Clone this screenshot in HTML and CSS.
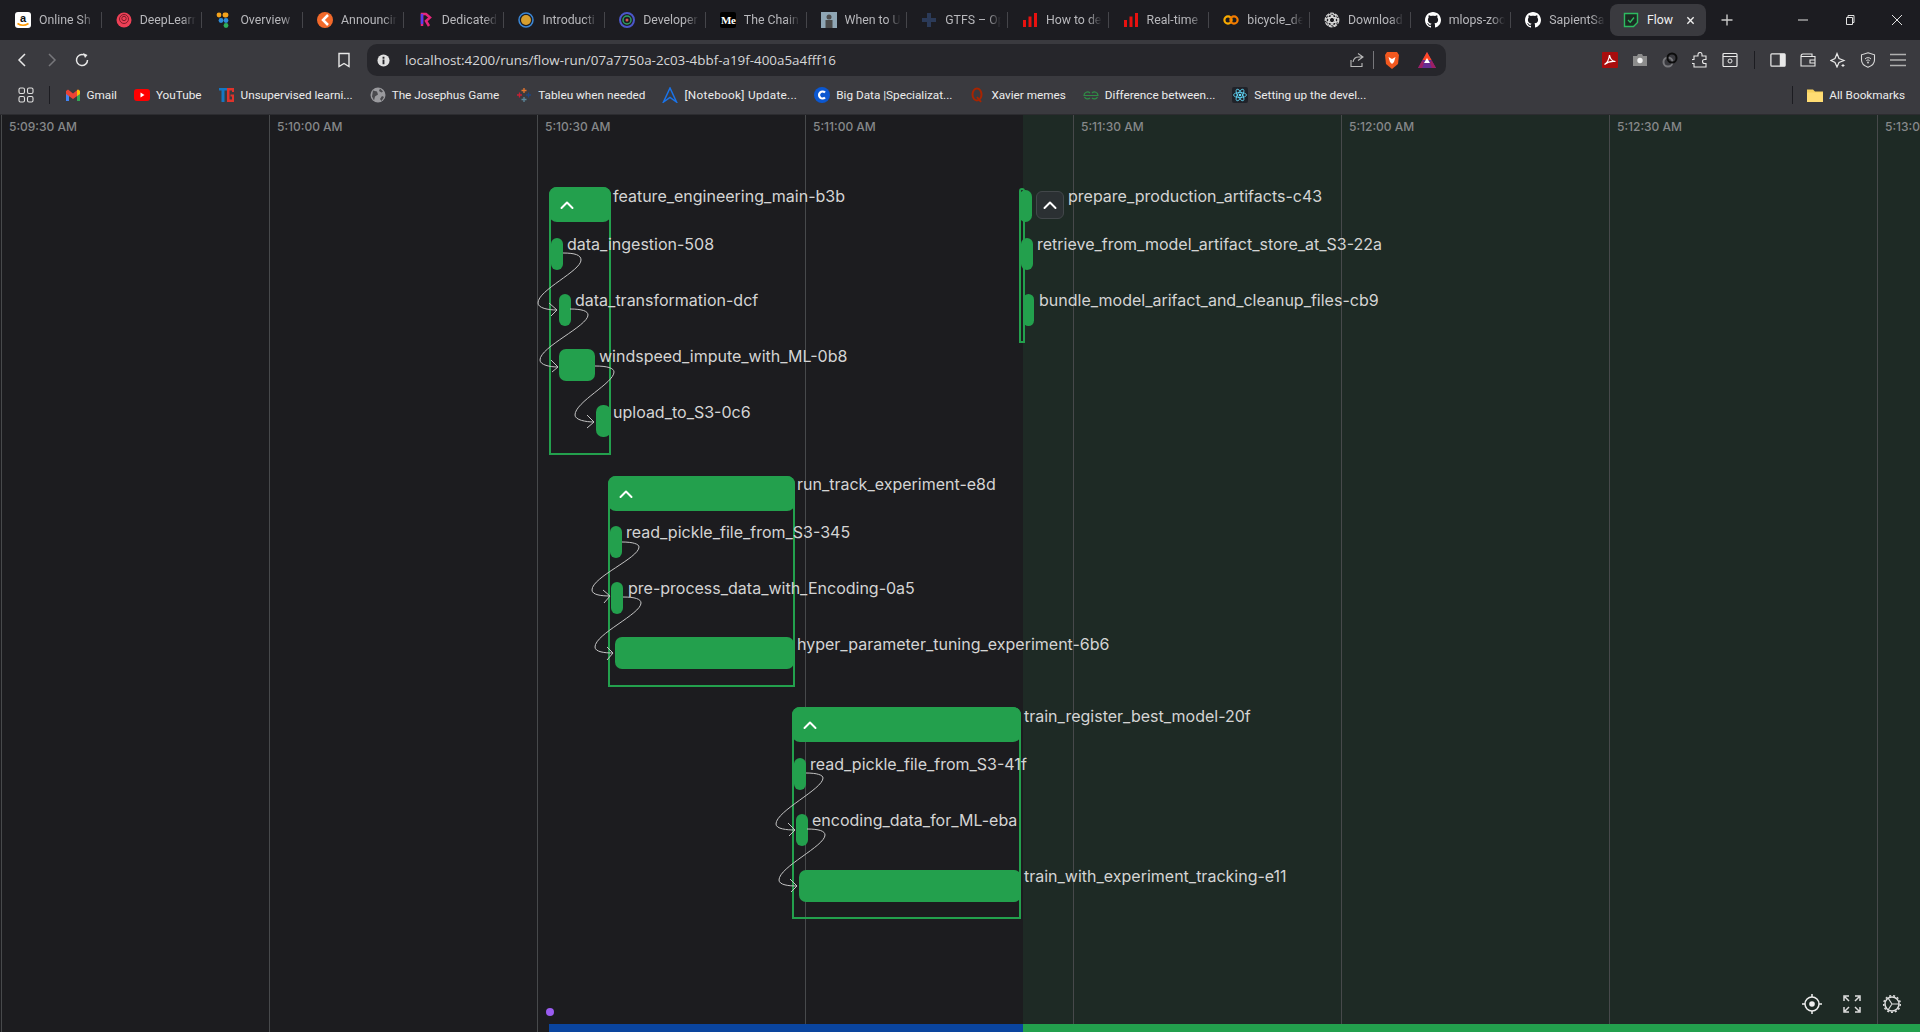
FILE: index.html
```html
<!doctype html>
<html lang="en">
<head>
  <meta charset="UTF-8">
  <meta name="viewport" content="width=device-width, initial-scale=1.0">
  <title>Flow</title>
  <link rel="stylesheet" href="styles.css">
</head>
<body>
  <svg class="sprites" width="0" height="0">
    <defs>
      <symbol id="octocat" viewBox="0 0 16 16">
        <path fill="#fff" d="M8 0C3.6 0 0 3.6 0 8c0 3.5 2.3 6.5 5.5 7.6.4.1.5-.2.5-.4v-1.4c-2.2.5-2.7-1-2.7-1-.4-.9-.9-1.2-.9-1.2-.7-.5.1-.5.1-.5.8.1 1.2.8 1.2.8.7 1.2 1.9.9 2.3.7.1-.5.3-.9.5-1.1-1.8-.2-3.6-.9-3.6-4 0-.9.3-1.6.8-2.1-.1-.2-.4-1 .1-2.1 0 0 .7-.2 2.2.8.6-.2 1.3-.3 2-.3s1.4.1 2 .3c1.5-1 2.2-.8 2.2-.8.4 1.1.2 1.9.1 2.1.5.6.8 1.3.8 2.1 0 3.1-1.9 3.7-3.7 3.9.3.3.6.8.6 1.5v2.2c0 .2.1.5.6.4C13.7 14.5 16 11.5 16 8c0-4.4-3.6-8-8-8z"/>
      </symbol>
      <symbol id="bars" viewBox="0 0 16 16">
        <path fill="#e8110f" d="M1 8h3v7H1zM6.5 4.500h3V15h-3zM12 1h3v14h-3z"/>
      </symbol>
      <symbol id="chevron" viewBox="0 0 16 16">
        <path fill="none" stroke="#fff" stroke-width="2" stroke-linecap="round" stroke-linejoin="round" d="M2.500 11 8 5.500l5.500 5.500"/>
      </symbol>
    </defs>
  </svg>

  <header class="browser">
    <div class="tabstrip">
      <div class="tab">
        <svg class="fav" viewBox="0 0 16 16"><rect width="16" height="16" rx="3" fill="#fff"/><text x="8" y="10" text-anchor="middle" class="fav-a">a</text><path d="M2.500 11.500Q8 15 13.500 11.500" fill="none" stroke="#f90" stroke-width="1.500"/></svg>
        <span class="tab-title">Online Sh</span>
      </div>
      <div class="tab">
        <svg class="fav" viewBox="0 0 16 16"><circle cx="8" cy="8" r="7.500" fill="#ee4056"/><circle cx="8" cy="7" r="4.500" fill="none" stroke="#7e1b2a" stroke-width="1"/><circle cx="8" cy="6.500" r="2.200" fill="none" stroke="#7e1b2a" stroke-width="1"/></svg>
        <span class="tab-title">DeepLearn</span>
      </div>
      <div class="tab">
        <svg class="fav" viewBox="0 0 16 16"><circle cx="3" cy="3" r="2.400" fill="#f4a31c"/><rect x="6.500" y=".6" width="6" height="4.800" rx="2.400" fill="#f4a31c"/><circle cx="5" cy="8.500" r="2.400" fill="#2d8cd9"/><circle cx="10" cy="8.500" r="2.400" fill="#2d8cd9"/><circle cx="10" cy="13.500" r="2.400" fill="#2fae5c"/></svg>
        <span class="tab-title">Overview</span>
      </div>
      <div class="tab">
        <svg class="fav" viewBox="0 0 16 16"><circle cx="8" cy="8" r="8" fill="#f2692a"/><path d="M11 3 6 8l5 5" fill="none" stroke="#fff" stroke-width="2.500"/></svg>
        <span class="tab-title">Announcin</span>
      </div>
      <div class="tab">
        <svg class="fav" viewBox="0 0 16 16"><path d="M4 14V2h4l4 3.500L8 9l3 5" fill="none" stroke="#e6257c" stroke-width="2.500"/><path d="M4 2v10" stroke="#5b3df0" stroke-width="2.500"/></svg>
        <span class="tab-title">Dedicated</span>
      </div>
      <div class="tab">
        <svg class="fav" viewBox="0 0 16 16"><circle cx="8" cy="8" r="7" fill="none" stroke="#3b87d6" stroke-width="1.500"/><circle cx="8" cy="8" r="5" fill="#d69e2e"/></svg>
        <span class="tab-title">Introducti</span>
      </div>
      <div class="tab">
        <svg class="fav" viewBox="0 0 16 16"><circle cx="8" cy="8" r="7" fill="none" stroke="#4b57c9" stroke-width="2"/><circle cx="8" cy="8" r="4" fill="none" stroke="#2f9e62" stroke-width="1.500"/><circle cx="8" cy="8" r="1.500" fill="#d9534f"/></svg>
        <span class="tab-title">Developer</span>
      </div>
      <div class="tab">
        <svg class="fav" viewBox="0 0 16 16"><rect width="16" height="16" rx="2" fill="#000"/><text x="1" y="12" class="fav-m">M</text><text x="11" y="12" class="fav-e">e</text></svg>
        <span class="tab-title">The Chain</span>
      </div>
      <div class="tab">
        <svg class="fav" viewBox="0 0 16 16"><rect width="16" height="16" fill="#8fa6b5"/><circle cx="8" cy="5" r="2.500" fill="#4d4d4d"/><rect x="4.500" y="8" width="7" height="8" fill="#4a4a4a"/></svg>
        <span class="tab-title">When to U</span>
      </div>
      <div class="tab">
        <svg class="fav" viewBox="0 0 16 16"><path d="M6 1h4v5h5v4h-5v5H6v-5H1V6h5z" fill="#2b3a58"/></svg>
        <span class="tab-title">GTFS – Op</span>
      </div>
      <div class="tab">
        <svg class="fav"><use href="#bars"/></svg>
        <span class="tab-title">How to de</span>
      </div>
      <div class="tab">
        <svg class="fav"><use href="#bars"/></svg>
        <span class="tab-title">Real-time</span>
      </div>
      <div class="tab">
        <svg class="fav" viewBox="0 0 16 16"><circle cx="5" cy="8" r="3.600" fill="none" stroke="#f9ab00" stroke-width="2.200"/><circle cx="11" cy="8" r="3.600" fill="none" stroke="#f57c00" stroke-width="2.200"/></svg>
        <span class="tab-title">bicycle_de</span>
      </div>
      <div class="tab">
        <svg class="fav" viewBox="0 0 16 16"><g fill="none" stroke="#d8d8d8" stroke-width="1.200"><circle cx="8" cy="8" r="6.800" stroke-dasharray="4 1"/><ellipse cx="8" cy="8" rx="6" ry="2.600"/><ellipse cx="8" cy="8" rx="6" ry="2.600" transform="rotate(60 8 8)"/><ellipse cx="8" cy="8" rx="6" ry="2.600" transform="rotate(120 8 8)"/></g></svg>
        <span class="tab-title">Download</span>
      </div>
      <div class="tab">
        <svg class="fav"><use href="#octocat"/></svg>
        <span class="tab-title">mlops-zoo</span>
      </div>
      <div class="tab">
        <svg class="fav"><use href="#octocat"/></svg>
        <span class="tab-title">SapientSa</span>
      </div>
      <div class="tab tab-active">
        <svg class="fav" viewBox="0 0 16 16"><path d="M1.500 1.500h13v9l-4 4h-9z" fill="#1b2b22" stroke="#2dbb60" stroke-width="1.400"/><path d="M5 8l2.200 2.200L11 5.500" fill="none" stroke="#2dbb60" stroke-width="1.300"/></svg>
        <span class="tab-title-active">Flow</span>
        <svg class="tab-close" viewBox="0 0 10 10"><path d="M1.500 1.500l7 7m0-7l-7 7" stroke="#eee" stroke-width="1.500"/></svg>
      </div>
      <svg class="new-tab" viewBox="0 0 12 12"><path d="M6 .5v11M.5 6h11" stroke="#c8c8c8" stroke-width="1.400"/></svg>
      <div class="window-btns">
        <svg class="win-icon" viewBox="0 0 12 12"><path d="M1 6h10" stroke="#e0e0e0"/></svg>
        <svg class="win-icon" viewBox="0 0 12 12"><path d="M2.500 3.500h6v7h-6zM4 3.500V1.500h6v7H8.500" fill="none" stroke="#e0e0e0"/></svg>
        <svg class="win-icon" viewBox="0 0 12 12"><path d="M1 1l10 10M11 1L1 11" stroke="#e0e0e0"/></svg>
      </div>
    </div>

    <div class="toolbar">
      <div class="nav-btns">
        <svg class="tool-icon" viewBox="0 0 16 16"><path d="M11 2 5 8l6 6" fill="none" stroke="#e8e8e8" stroke-width="1.500"/></svg>
        <svg class="tool-icon" viewBox="0 0 16 16"><path d="M5 2l6 6-6 6" fill="none" stroke="#77777b" stroke-width="1.500"/></svg>
        <svg class="tool-icon" viewBox="0 0 16 16"><path d="M13.500 8A5.500 5.500 0 1 1 10 2.900" fill="none" stroke="#e8e8e8" stroke-width="1.500"/><path d="M9 1l4.500 2L11 6z" fill="#e8e8e8"/></svg>
      </div>
      <svg class="bookmark-icon" viewBox="0 0 16 16"><path d="M3 1.500h10v13l-5-3-5 3z" fill="none" stroke="#e8e8e8" stroke-width="1.400"/></svg>
      <div class="omnibox">
        <svg class="info-icon" viewBox="0 0 14 14"><circle cx="7" cy="7" r="6.500" fill="#e0e0e0"/><path d="M6 6h2v5H6zM6 3h2v2H6z" fill="#26262b"/></svg>
        <span class="url">localhost:4200/runs/flow-run/07a7750a-2c03-4bbf-a19f-400a5a4fff16</span>
        <svg class="share-icon" viewBox="0 0 16 16"><path d="M9 1.500l5 3.500-5 3.500M14 5H9.500C6 5 4.500 7.500 4 10M2 8v6.500h11V11" fill="none" stroke="#b8b8b8" stroke-width="1.100"/></svg>
        <span class="omni-sep"></span>
        <svg class="brave-icon" viewBox="0 0 16 18"><path d="M3 1h10l2 3-1 9-6 5-6-5-1-9z" fill="#f1581f"/><path d="M4.500 6 8 8l3.500-2L10 11l-2 2-2-2z" fill="#fff"/></svg>
        <svg class="bat-icon" viewBox="0 0 18 16"><path d="M9 0l9 16H0z" fill="#662d91"/><path d="M9 0l4.500 8h-9z" fill="#ff4724"/><path d="M9 6l3 5H6z" fill="#fff"/><path d="M0 16l4.500-8L6 11l-2 5zM18 16l-4.500-8-1.500 3 2 5z" fill="#9e1f63"/></svg>
      </div>
      <div class="ext-icons">
        <svg class="tool-icon" viewBox="0 0 16 16"><rect width="16" height="16" rx="1" fill="#a80d0d"/><path d="M2.500 12.500C5 11 7 7 7.500 3c.5 4 2 6 6 6.500-4-.5-8 .5-11 3z" fill="none" stroke="#fff" stroke-width="1.200"/></svg>
        <svg class="tool-icon" viewBox="0 0 16 16"><path d="M1 4h4l1-2h4l1 2h4v10H1z" fill="#8c8c8c"/><circle cx="8" cy="8.500" r="2.700" fill="#f0f0f0"/></svg>
        <svg class="tool-icon" viewBox="0 0 16 16"><circle cx="6" cy="10" r="4.500" fill="none" stroke="#77777b" stroke-width="2"/><circle cx="10" cy="6" r="4.500" fill="none" stroke="#0c0c0c" stroke-width="2"/></svg>
        <svg class="tool-icon" viewBox="0 0 16 16"><path d="M6 2.500a2 2 0 0 1 4 0V4h4v3.500h-1.500a2 2 0 0 0 0 4H14V15H2v-3.500H.8a2 2 0 0 1 0-4H2V4h4z" fill="none" stroke="#e8e8e8" stroke-width="1.100"/></svg>
        <svg class="tool-icon" viewBox="0 0 16 16"><rect x="1" y="1.500" width="14" height="13" rx="1" fill="none" stroke="#e8e8e8" stroke-width="1.200"/><path d="M1 4.500h14" stroke="#e8e8e8"/><circle cx="8" cy="9" r="2" fill="none" stroke="#e8e8e8"/></svg>
        <span class="tool-sep"></span>
        <svg class="tool-icon" viewBox="0 0 18 16"><rect x="1" y="1" width="16" height="14" rx="1" fill="none" stroke="#e8e8e8" stroke-width="1.400"/><rect x="11" y="1" width="6" height="14" fill="#e8e8e8"/></svg>
        <svg class="tool-icon" viewBox="0 0 16 16"><path d="M1 4.500C1 3 2 2 3 2h9v2.500M1 4.500V14h14V4.500zM10 8h5v3h-5z" fill="none" stroke="#e8e8e8" stroke-width="1.100"/></svg>
        <svg class="tool-icon" viewBox="0 0 16 16"><path d="M7 1.500 9 6.500l5 2-5 2-2 4.500-2-4.500-4-2 4-2z" fill="none" stroke="#e8e8e8" stroke-width="1.200"/><path d="M13 12v3M11.500 13.500h3" stroke="#e8e8e8"/></svg>
        <svg class="tool-icon" viewBox="0 0 16 16"><path d="M8 .8l6.500 2V8c0 3.500-3 6-6.500 7.300C4.500 14 1.500 11.500 1.500 8V2.800z" fill="none" stroke="#d8d8d8" stroke-width="1.100"/><path d="M5 7a4 4 0 0 1 6 0M6.300 8.700a2.300 2.300 0 0 1 3.400 0" fill="none" stroke="#d8d8d8"/><circle cx="8" cy="10.500" r=".9" fill="#d8d8d8"/></svg>
        <svg class="tool-icon" viewBox="0 0 16 16"><path d="M0 2.500h16M0 8h16M0 13.500h16" stroke="#b0b0b0" stroke-width="1.600"/></svg>
      </div>
    </div>

    <div class="bookmarks">
      <svg class="apps-icon" viewBox="0 0 16 16"><g fill="none" stroke="#e0e0e0" stroke-width="1.100"><rect x="1" y="1" width="5.500" height="5.500" rx="1.500"/><rect x="9.500" y="1" width="5.500" height="5.500" rx="1.500"/><rect x="1" y="9.500" width="5.500" height="5.500" rx="1.500"/><rect x="9.500" y="9.500" width="5.500" height="5.500" rx="1.500"/></g></svg>
      <span class="bm-sep"></span>
      <div class="bm"><svg class="fav" viewBox="0 0 16 16"><path d="M1 4v10h3V7z" fill="#4285f4"/><path d="M15 4v10h-3V7z" fill="#34a853"/><path d="M1 4l2-1.500 5 4 5-4L15 4v3l-7 5-7-5z" fill="#ea4335"/><path d="M13 2.500 15 4v3l-3 2V3.300z" fill="#fbbc04"/></svg><span>Gmail</span></div>
      <div class="bm"><svg class="fav" viewBox="0 0 16 16"><rect y="2" width="16" height="12" rx="3" fill="#f00"/><path d="M6.500 5.500l4 2.500-4 2.500z" fill="#fff"/></svg><span>YouTube</span></div>
      <div class="bm"><svg class="fav" viewBox="0 0 16 16"><path d="M0 1h8v2.500H5.500V15h-3V3.500H0z" fill="#1577c2"/><path d="M15 5h-2V3.500h-2.500v9H13V9.500h-1.500V7.500H15V15H8V1h7z" fill="#e0332b"/></svg><span>Unsupervised learni...</span></div>
      <div class="bm"><svg class="fav" viewBox="0 0 16 16"><circle cx="8" cy="8" r="7.500" fill="#9a9a9e"/><path d="M3 3.500l4 1 1 3-3 2-1 4-2-4zM10 1.500l3 3-1.500 1L9 4zM12 9l2 1-2.500 4-1.500-2z" fill="#4a4a4e"/></svg><span>The Josephus Game</span></div>
      <div class="bm"><svg class="fav" viewBox="0 0 16 16"><path d="M8 1v5M5.500 3.500h5" stroke="#e8762d" stroke-width="1.300"/><path d="M8 10v5M5.500 12.500h5" stroke="#5b879b" stroke-width="1.300"/><path d="M3.500 5.500v5M1 8h5" stroke="#c72035" stroke-width="1.300"/><path d="M12.500 5.500v5M10 8h5" stroke="#1f457e" stroke-width="1.300"/></svg><span>Tableu when needed</span></div>
      <div class="bm bm-loose"><svg class="fav" viewBox="0 0 16 16"><path d="M8 1 1.500 15 8 10.500l6.500 4.500z" fill="none" stroke="#1a73e8" stroke-width="1.500"/></svg><span>[Notebook] Update...</span></div>
      <div class="bm"><svg class="fav" viewBox="0 0 16 16"><circle cx="8" cy="8" r="8" fill="#0b57d0"/><path d="M11 5.500a3.500 3.500 0 1 0 0 5" fill="none" stroke="#fff" stroke-width="2.200"/></svg><span>Big Data |Specializat...</span></div>
      <div class="bm"><svg class="fav" viewBox="0 0 16 16"><ellipse cx="8" cy="7.500" rx="4.500" ry="6" fill="none" stroke="#a82400" stroke-width="2"/><path d="M8 10l4 5" stroke="#a82400" stroke-width="2"/></svg><span>Xavier memes</span></div>
      <div class="bm"><svg class="fav" viewBox="0 0 16 16"><path d="M8 8.500H1a3.500 3.500 0 0 1 6-2.500M8 8.500h7a3.500 3.500 0 0 0-6-2.500M1.500 10a3.500 3.500 0 0 0 5.500 1M14.500 10A3.500 3.500 0 0 1 9 11" fill="none" stroke="#2f8d46" stroke-width="1.200"/></svg><span>Difference between...</span></div>
      <div class="bm"><svg class="fav" viewBox="0 0 16 16"><rect width="16" height="16" rx="2" fill="#20232a"/><g fill="none" stroke="#61dafb" stroke-width=".8"><ellipse cx="8" cy="8" rx="6.500" ry="2.500"/><ellipse cx="8" cy="8" rx="6.500" ry="2.500" transform="rotate(60 8 8)"/><ellipse cx="8" cy="8" rx="6.500" ry="2.500" transform="rotate(120 8 8)"/></g><circle cx="8" cy="8" r="1.300" fill="#61dafb"/></svg><span>Setting up the devel...</span></div>
      <div class="bm-end">
        <span class="bm-sep"></span>
        <div class="bm"><svg class="fav" viewBox="0 0 16 16"><path d="M0 2.500h6l2 2h8V15H0z" fill="#f5cf5c"/><path d="M0 5.500h16V15H0z" fill="#ffdc73"/></svg><span>All Bookmarks</span></div>
      </div>
    </div>
  </header>

  <main class="timeline">
    <div class="future"></div>

    <div class="ticks">
      <div class="tick">5:09:30 AM</div>
      <div class="tick">5:10:00 AM</div>
      <div class="tick">5:10:30 AM</div>
      <div class="tick">5:11:00 AM</div>
      <div class="tick">5:11:30 AM</div>
      <div class="tick">5:12:00 AM</div>
      <div class="tick">5:12:30 AM</div>
      <div class="tick">5:13:0</div>
    </div>

    <!-- feature_engineering -->
    <div class="group g-feature"><div class="group-head"><svg class="chev"><use href="#chevron"/></svg></div></div>
    <div class="node n-ingest"></div>
    <div class="node n-transform"></div>
    <div class="node n-windspeed"></div>
    <div class="node n-upload"></div>

    <!-- run_track_experiment -->
    <div class="group g-track"><div class="group-head"><svg class="chev"><use href="#chevron"/></svg></div></div>
    <div class="node n-pickle1"></div>
    <div class="node n-preprocess"></div>
    <div class="node n-hyper"></div>

    <!-- train_register_best_model -->
    <div class="group g-train"><div class="group-head"><svg class="chev"><use href="#chevron"/></svg></div></div>
    <div class="node n-pickle2"></div>
    <div class="node n-encoding"></div>
    <div class="node n-tracking"></div>

    <!-- prepare_production_artifacts -->
    <div class="group g-prepare"></div>
    <div class="node n-prepare"></div>
    <div class="node n-retrieve"></div>
    <div class="node n-bundle"></div>
    <div class="collapse-btn"><svg class="chev-small"><use href="#chevron"/></svg></div>

    <svg class="edges" viewBox="0 115 1920 917">
      <g fill="none" stroke="#c4c4c4" stroke-width="1">
        <path d="M563 253C575 253 581 255 581 260C581 271 538 290 538 303C538 308 548 310 557 310M549 303L557 310L551 316"/>
        <path d="M570 309C582 309 588 311 588 315C588 326 540 347 540 360C540 365 550 367 558 367M551 360L558 367L552 372"/>
        <path d="M595 366C607 366 614 368 614 372C614 383 575 402 575 415C575 420 586 422 594 422M587 415L594 422L587 428"/>
        <path d="M622 542C633 542 639 544 639 547C639 558 592 577 592 590C592 595 602 596 610 596M603 590L610 596L604 603"/>
        <path d="M623 597C635 597 641 599 641 603C641 614 595 634 595 647C595 652 605 653 613 653M607 647L613 653L607 660"/>
        <path d="M806 773C817 773 823 775 823 778C823 789 776 811 776 824C776 829 787 830 795 830M788 823L795 830L789 836"/>
        <path d="M807 829C819 829 825 831 825 835C825 846 779 867 779 880C779 885 789 886 797 886M790 879L797 886L791 892"/>
      </g>
    </svg>

    <span class="label l-feature">feature_engineering_main-b3b</span>
    <span class="label l-ingest">data_ingestion-508</span>
    <span class="label l-transform">data_transformation-dcf</span>
    <span class="label l-windspeed">windspeed_impute_with_ML-0b8</span>
    <span class="label l-upload">upload_to_S3-0c6</span>
    <span class="label l-track">run_track_experiment-e8d</span>
    <span class="label l-pickle1">read_pickle_file_from_S3-345</span>
    <span class="label l-preprocess">pre-process_data_with_Encoding-0a5</span>
    <span class="label l-hyper">hyper_parameter_tuning_experiment-6b6</span>
    <span class="label l-train">train_register_best_model-20f</span>
    <span class="label l-pickle2">read_pickle_file_from_S3-41f</span>
    <span class="label l-encoding">encoding_data_for_ML-eba</span>
    <span class="label l-tracking">train_with_experiment_tracking-e11</span>
    <span class="label l-prepare">prepare_production_artifacts-c43</span>
    <span class="label l-retrieve">retrieve_from_model_artifact_store_at_S3-22a</span>
    <span class="label l-bundle">bundle_model_arifact_and_cleanup_files-cb9</span>

    <div class="start-dot"></div>
    <div class="run-bar">
      <div class="run-past"></div>
      <div class="run-rest"></div>
    </div>

    <div class="graph-controls">
      <svg class="ctl-icon" viewBox="0 0 20 20"><circle cx="10" cy="10" r="7" fill="none" stroke="#eee" stroke-width="1.500"/><circle cx="10" cy="10" r="2.800" fill="#eee"/><path d="M10 0v3M10 17v3M0 10h3M17 10h3" stroke="#eee" stroke-width="1.500"/></svg>
      <svg class="ctl-icon" viewBox="0 0 20 20"><path d="M2 7V2h5M13 2h5v5M18 13v5h-5M7 18H2v-5M3 3l4 4M17 3l-4 4M17 17l-4-4M3 17l4-4" fill="none" stroke="#ddd" stroke-width="1.500"/></svg>
      <svg class="ctl-icon" viewBox="0 0 20 20"><circle cx="10" cy="10" r="7" fill="none" stroke="#ddd" stroke-width="1.500"/><circle cx="10" cy="10" r="8.300" fill="none" stroke="#ddd" stroke-width="1.500" stroke-dasharray="2 2"/><path d="M10 10H17M10 10L6 4M10 10L6 16" stroke="#ddd" stroke-width="1.200"/></svg>
    </div>
  </main>
</body>
</html>
```

FILE: styles.css
```css
* {
  box-sizing: border-box;
}

html, body {
  height: 100%;
}

body {
  margin: 0;
  display: flex;
  flex-direction: column;
  overflow: hidden;
  background-color: #1c1c1f;
  font-family: Roboto, "Open Sans", sans-serif;
}

.sprites {
  position: absolute;
}

/* browser chrome */
.browser {
  flex: none;
  height: 115px;
  background-color: #3a3a3f;
  border-bottom: 1px solid #2c2c30;
}

.tabstrip {
  display: flex;
  align-items: center;
  height: 40px;
  padding-left: 1px;
  background-color: #1c1c21;
}

.tab {
  position: relative;
  display: flex;
  align-items: center;
  flex: none;
  gap: 8px;
  width: 100.7px;
  height: 32px;
  padding-left: 14px;
}

.tab::after {
  content: "";
  position: absolute;
  right: 0;
  top: 8px;
  height: 16px;
  border-right: 1px solid #45454a;
}

.tab:nth-child(16)::after,
.tab-active::after {
  display: none;
}

.fav {
  flex: none;
  width: 16px;
  height: 16px;
}

.fav-a {
  font: bold 11px "Liberation Sans", sans-serif;
  fill: #111;
}

.fav-m, .fav-e {
  font: bold 11px "Liberation Serif", serif;
  fill: #fff;
}

.tab-title, .tab-title-active {
  font-size: 12.300px;
  white-space: nowrap;
  color: #b8b8bc;
}

.tab-title {
  width: 56px;
  -webkit-mask-image: linear-gradient(to right, #000 75%, transparent 100%);
  mask-image: linear-gradient(to right, #000 75%, transparent 100%);
}

.tab-active {
  width: 96px;
  margin-left: -2px;
  padding-left: 13px;
  background-color: #3a3a3f;
  border-radius: 8px;
}

.tab-title-active {
  color: #f0f0f0;
}

.tab-close {
  width: 9px;
  height: 9px;
  margin-left: auto;
  margin-right: 11px;
}

.new-tab {
  width: 12px;
  height: 12px;
  margin-left: 15px;
}

.window-btns {
  display: flex;
  align-items: center;
  gap: 35px;
  margin-left: auto;
  padding-right: 17px;
}

.win-icon {
  width: 12px;
  height: 12px;
}

.toolbar {
  display: flex;
  align-items: center;
  height: 40px;
}

.nav-btns {
  display: flex;
  gap: 14px;
  padding-left: 14px;
}

.tool-icon {
  width: 16px;
  height: 16px;
  flex: none;
}

.bookmark-icon {
  width: 16px;
  height: 16px;
  margin-left: 246px;
}

.omnibox {
  display: flex;
  align-items: center;
  width: 1079px;
  height: 32px;
  margin-left: 15px;
  padding-left: 10px;
  background-color: #26262b;
  border-radius: 10px;
}

.info-icon {
  width: 13px;
  height: 13px;
  flex: none;
}

.url {
  margin-left: 15px;
  font-family: "Open Sans", sans-serif;
  font-size: 13.400px;
  color: #d6d6d8;
}

.share-icon {
  width: 16px;
  height: 16px;
  margin-left: auto;
}

.omni-sep {
  height: 18px;
  margin-left: 8px;
  border-left: 1px solid #77777b;
}

.brave-icon {
  width: 16px;
  height: 18px;
  margin-left: 10px;
}

.bat-icon {
  width: 18px;
  height: 16px;
  margin-left: 18px;
  margin-right: 10px;
}

.ext-icons {
  display: flex;
  align-items: center;
  gap: 14px;
  margin-left: 156px;
}

.tool-sep {
  height: 18px;
  margin: 0 1.500px;
  border-left: 1px solid #1c1c21;
}

.bookmarks {
  display: flex;
  align-items: center;
  height: 34px;
  padding: 0 0 5px 18px;
  font-size: 11.750px;
  color: #ececec;
}

.apps-icon {
  width: 16px;
  height: 16px;
}

.bm-sep {
  height: 18px;
  margin-left: 15px;
  margin-right: 6px;
  border-left: 1px solid #1c1c21;
}

.bm {
  display: flex;
  align-items: center;
  gap: 6px;
  padding: 0 8.500px;
  white-space: nowrap;
}

.bm-loose {
  letter-spacing: .3px;
}

.bm-end {
  display: flex;
  align-items: center;
  margin-left: auto;
}

.bm-end .bm {
  padding: 0 15px 0 8px;
}

/* flow run timeline */
.timeline {
  position: relative;
  flex: 1;
  overflow: hidden;
  font-family: Inter, "Noto Sans", sans-serif;
}

.future {
  position: absolute;
  top: 0;
  bottom: 0;
  left: 1023px;
  right: 0;
  background-color: #1e2a25;
}

.ticks {
  position: absolute;
  top: 0;
  bottom: 0;
  left: 1px;
  display: flex;
}

.tick {
  flex: none;
  width: 268px;
  padding: 4px 0 0 7px;
  font-size: 12px;
  font-weight: 500;
  line-height: 15px;
  white-space: nowrap;
  color: #86888a;
  border-left: 1px solid #47494b;
}

.group, .node, .label, .collapse-btn, .start-dot {
  position: absolute;
}

.group {
  border: 2px solid #23a04d;
  border-radius: 8px 8px 0 0;
}

.group-head {
  height: 35px;
  margin: -2px;
  padding: 10px 0 0 10px;
  background-color: #23a04d;
  border-radius: 8px;
}

.chev {
  display: block;
  width: 16px;
  height: 16px;
}

.g-feature { left: 549px; top: 72px; width: 62px; height: 268px; }
.g-track { left: 608px; top: 361px; width: 187px; height: 211px; }
.g-train { left: 792px; top: 592px; width: 229px; height: 212px; }
.g-prepare { left: 1019px; top: 73px; width: 6px; height: 155px; border-radius: 3px 3px 0 0; }

.node {
  height: 32px;
  background-color: #23a04d;
  border-radius: 7px;
}

.n-ingest { left: 551px; top: 123px; width: 12px; }
.n-transform { left: 559px; top: 179px; width: 12px; }
.n-windspeed { left: 559px; top: 234px; width: 36px; }
.n-upload { left: 596px; top: 290px; width: 15px; }

.n-pickle1 { left: 610px; top: 411px; width: 12px; }
.n-preprocess { left: 611px; top: 467px; width: 12px; }
.n-hyper { left: 615px; top: 522px; width: 179px; }

.n-pickle2 { left: 794px; top: 643px; width: 12px; }
.n-encoding { left: 796px; top: 699px; width: 12px; }
.n-tracking { left: 799px; top: 755px; width: 222px; }

.n-prepare { left: 1019px; top: 75px; width: 13px; }
.n-retrieve { left: 1021px; top: 123px; width: 12px; }
.n-bundle { left: 1023px; top: 179px; width: 11px; }

.collapse-btn {
  left: 1036px;
  top: 76px;
  display: flex;
  align-items: center;
  justify-content: center;
  width: 28px;
  height: 28px;
  background-color: #2b3033;
  border: 1px solid #42474a;
  border-radius: 6px;
}

.chev-small {
  width: 16px;
  height: 16px;
}

.edges {
  position: absolute;
  top: 0;
  left: 0;
  width: 1920px;
  height: 917px;
  pointer-events: none;
}

.label {
  font-size: 16px;
  line-height: 20px;
  white-space: nowrap;
  color: #d4d4d4;
}

.l-feature { left: 613px; top: 71px; }
.l-ingest { left: 567px; top: 119px; }
.l-transform { left: 575px; top: 175px; }
.l-windspeed { left: 599px; top: 231px; }
.l-upload { left: 613px; top: 287px; }
.l-track { left: 797px; top: 359px; }
.l-pickle1 { left: 626px; top: 407px; }
.l-preprocess { left: 628px; top: 463px; }
.l-hyper { left: 797px; top: 519px; }
.l-train { left: 1024px; top: 591px; }
.l-pickle2 { left: 810px; top: 639px; }
.l-encoding { left: 812px; top: 695px; }
.l-tracking { left: 1024px; top: 751px; }
.l-prepare { left: 1068px; top: 71px; }
.l-retrieve { left: 1037px; top: 119px; }
.l-bundle { left: 1039px; top: 175px; }

.start-dot {
  left: 546px;
  bottom: 16px;
  width: 8px;
  height: 8px;
  background-color: #9a5cf0;
  border-radius: 50%;
}

.run-bar {
  position: absolute;
  left: 549px;
  right: 0;
  bottom: 0;
  display: flex;
  height: 8px;
}

.run-past {
  width: 474px;
  background-color: #0a459f;
}

.run-rest {
  flex: 1;
  background-color: #23a04d;
}

.graph-controls {
  position: absolute;
  right: 18px;
  bottom: 18px;
  display: flex;
  gap: 20px;
}

.ctl-icon {
  width: 20px;
  height: 20px;
}
```
